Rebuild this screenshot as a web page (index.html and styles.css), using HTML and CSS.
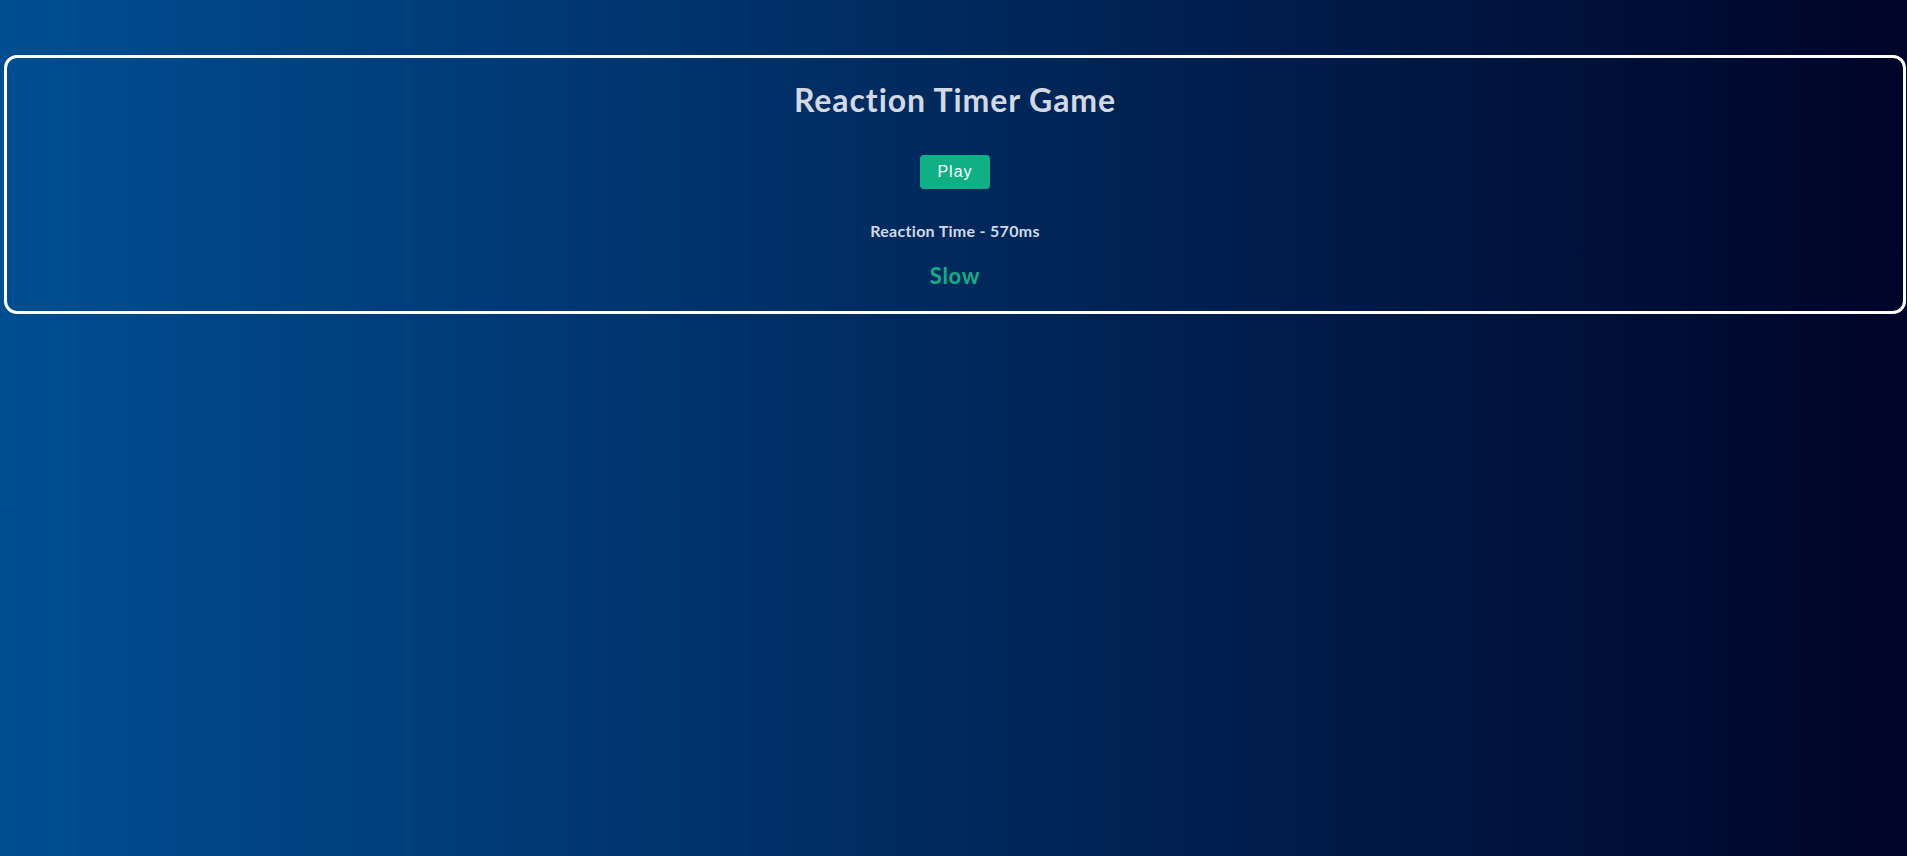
FILE: index.html
```html
<!DOCTYPE html>
<html lang="en">
<head>
<meta charset="utf-8">
<title>Reaction Timer Game</title>
<link rel="stylesheet" href="styles.css">
</head>
<body>
<main class="card">
  <h1 class="title">Reaction Timer Game</h1>
  <button class="play">Play</button>
  <p class="result">Reaction Time - 570ms</p>
  <p class="rank">Slow</p>
</main>
</body>
</html>
```
FILE: styles.css
```css
html, body {
  margin: 0;
  height: 100%;
}
body {
  background: linear-gradient(to left, #000428, #004e92);
  font-family: Lato, "Open Sans", sans-serif;
  padding-top: 55px;
  box-sizing: border-box;
}
.card {
  margin: 0 1px 0 4px;
  border: 3px solid #ffffff;
  border-radius: 13px;
  padding: 22px 0 21px;
  display: flex;
  flex-direction: column;
  align-items: center;
}
.title {
  margin: 0;
  font-size: 32px;
  line-height: 40px;
  font-weight: 700;
  letter-spacing: 0.9px;
  color: #d3d9e3;
}
.play {
  margin-top: 35px;
  height: 34px;
  padding: 0 17px;
  border: none;
  border-radius: 4px;
  background: #10b086;
  color: #ffffff;
  font-family: "Liberation Sans", Arial, sans-serif;
  font-size: 16px;
  letter-spacing: 1px;
}
.result {
  margin: 32px 0 0;
  font-size: 16px;
  line-height: 20px;
  font-weight: 700;
  letter-spacing: 0.3px;
  color: #d3d9e6;
}
.rank {
  margin: 21px 0 0;
  font-size: 22px;
  line-height: 28px;
  font-weight: 700;
  letter-spacing: 0.7px;
  color: #10b086;
}
```
